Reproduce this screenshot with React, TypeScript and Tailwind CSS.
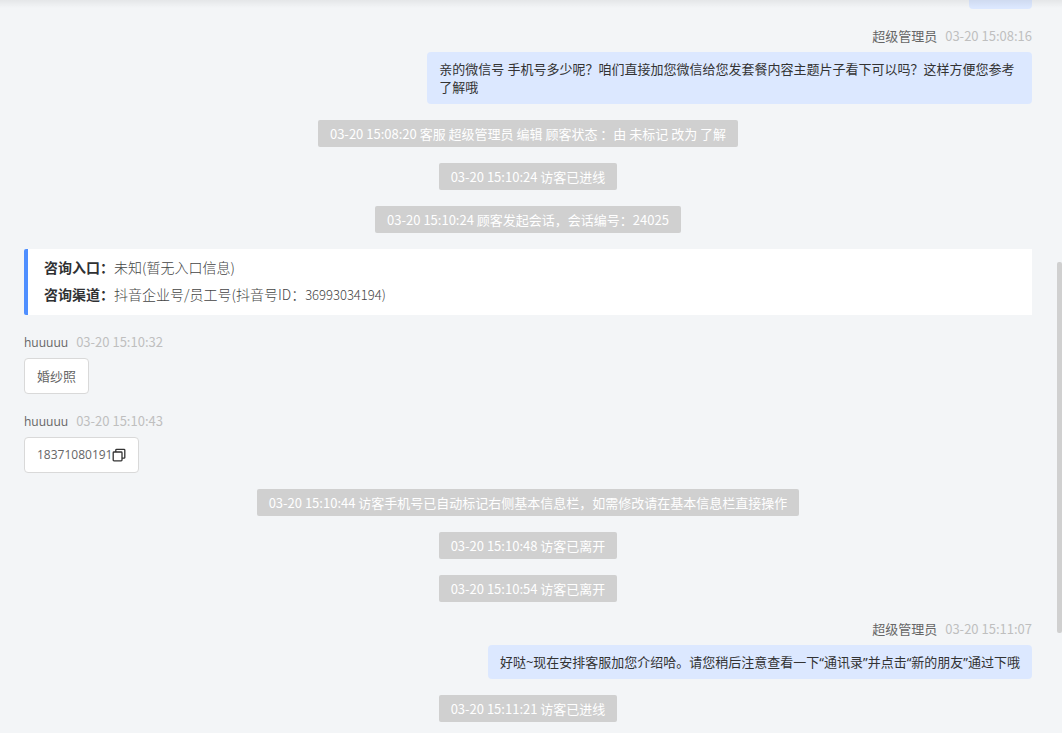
import type { ReactNode } from 'react';

type Item =
  | { type: 'notice'; time: string; text: string }
  | { type: 'source'; rows: { label: string; value: string; id?: string }[] }
  | { type: 'staff' | 'visitor'; name: string; time: string; text: string; copyable?: boolean };

const ITEMS: Item[] = [
  {
    type: 'staff',
    name: '超级管理员',
    time: '03-20 15:08:16',
    text: '亲的微信号 手机号多少呢？咱们直接加您微信给您发套餐内容主题片子看下可以吗？这样方便您参考了解哦',
  },
  { type: 'notice', time: '03-20 15:08:20', text: '客服 超级管理员 编辑 顾客状态 ：由 未标记 改为 了解' },
  { type: 'notice', time: '03-20 15:10:24', text: '访客已进线' },
  { type: 'notice', time: '03-20 15:10:24', text: '顾客发起会话，会话编号：24025' },
  {
    type: 'source',
    rows: [
      { label: '咨询入口：', value: '未知(暂无入口信息)' },
      { label: '咨询渠道：', value: '抖音企业号/员工号(抖音号ID：', id: '36993034194)' },
    ],
  },
  { type: 'visitor', name: 'huuuuu', time: '03-20 15:10:32', text: '婚纱照' },
  { type: 'visitor', name: 'huuuuu', time: '03-20 15:10:43', text: '18371080191', copyable: true },
  {
    type: 'notice',
    time: '03-20 15:10:44',
    text: '访客手机号已自动标记右侧基本信息栏，如需修改请在基本信息栏直接操作',
  },
  { type: 'notice', time: '03-20 15:10:48', text: '访客已离开' },
  { type: 'notice', time: '03-20 15:10:54', text: '访客已离开' },
  {
    type: 'staff',
    name: '超级管理员',
    time: '03-20 15:11:07',
    text: '好哒~现在安排客服加您介绍哈。请您稍后注意查看一下“通讯录”并点击“新的朋友”通过下哦',
  },
  { type: 'notice', time: '03-20 15:11:21', text: '访客已进线' },
];

function CopyIcon() {
  return (
    <svg className="h-[14px] w-[14px]" viewBox="0 0 14 14" fill="none" stroke="#333" strokeWidth="1.3">
      <rect x="1.2" y="4" width="8.8" height="8.8" rx="0.8" />
      <path d="M3.8 4V2.1a.8.8 0 0 1 .8-.8H12a.8.8 0 0 1 .8.8v7.3a.8.8 0 0 1-.8.8h-2" />
    </svg>
  );
}

function Notice({ time, text }: { time: string; text: string }) {
  return (
    <div className="self-center rounded-xs bg-[#d0d0d0] px-3 text-[13px] leading-[27px] text-white">
      {time} {text}
    </div>
  );
}

function MessageHeader({ name, time, mine }: { name: string; time: string; mine: boolean }) {
  return (
    <div className="mb-[5px] flex h-[22px] items-baseline gap-2 text-[13px] leading-[22px]">
      <span className={mine ? 'text-[#666]' : "font-['Open_Sans',sans-serif] text-xs leading-[22px] text-[#666]"}>
        {name}
      </span>
      <time className="text-[#bfbfbf]">{time}</time>
    </div>
  );
}

function Bubble({ mine, children }: { mine: boolean; children: ReactNode }) {
  return (
    <div
      className={
        mine
          ? "max-w-3/5 rounded bg-[#dce8ff] px-3 py-2 font-['Noto_Sans','Noto_Sans_CJK_SC',sans-serif] text-[13px] leading-[18px] text-[#333]"
          : 'flex max-w-3/5 items-center rounded border border-[#d9d9d9] bg-white px-3 py-2 text-[13px] leading-[18px] text-[#666]'
      }
    >
      {children}
    </div>
  );
}

export default function App() {
  return (
    <main
      lang="zh-CN"
      className="relative min-h-screen overflow-hidden bg-[#f3f5f7] font-['Noto_Sans_CJK_SC',sans-serif]"
    >
      <div className="flex flex-col gap-4 pr-[30px] pb-[11px] pl-6">
        {/* tail of the previous message */}
        <div className="h-[9px] w-[63px] self-end rounded-b bg-[#dce8ff]" />

        {ITEMS.map((item, i) => {
          if (item.type === 'notice') {
            return <Notice key={i} time={item.time} text={item.text} />;
          }
          if (item.type === 'source') {
            return (
              <dl key={i} className="rounded-l-xs border-l-4 border-[#4f8fff] bg-white px-4 pt-[5px] pb-[7px] text-sm leading-[27px]">
                {item.rows.map((row) => (
                  <div key={row.label} className="flex">
                    <dt className="font-bold text-[#303133]">{row.label}</dt>
                    <dd className="font-light text-[#444]">
                      {row.value}
                      {row.id && <span className="text-[13px]">{row.id}</span>}
                    </dd>
                  </div>
                ))}
              </dl>
            );
          }
          const mine = item.type === 'staff';
          return (
            <article key={i} className={mine ? 'flex flex-col items-end' : 'flex flex-col items-start'}>
              <MessageHeader name={item.name} time={item.time} mine={mine} />
              <Bubble mine={mine}>
                {item.copyable ? (
                  <>
                    <span className="font-['Open_Sans',sans-serif] text-xs leading-[18px]">{item.text}</span>
                    <button type="button" aria-label="复制">
                      <CopyIcon />
                    </button>
                  </>
                ) : (
                  item.text
                )}
              </Bubble>
            </article>
          );
        })}
      </div>

      {/* shadow of the bar above the list */}
      <div className="pointer-events-none absolute inset-x-0 top-0 h-2 bg-linear-to-b from-black/6 to-transparent" />

      {/* scrollbar thumb */}
      <div className="absolute top-[262px] right-0 h-[371px] w-[5px] rounded-xs bg-[#d0d0d0]" />
    </main>
  );
}
